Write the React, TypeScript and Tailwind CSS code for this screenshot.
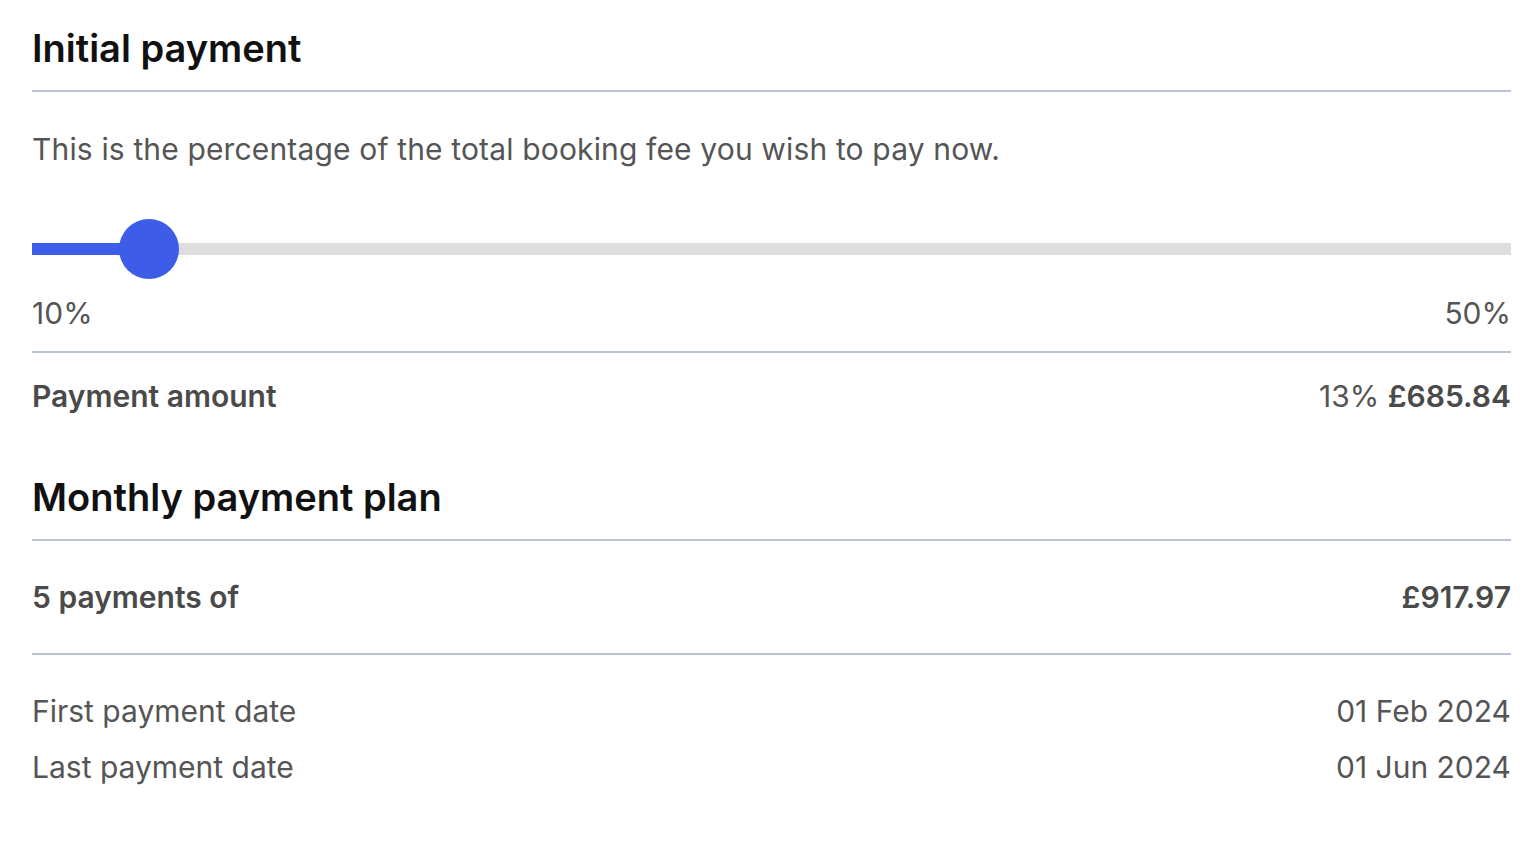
import { useState } from 'react';

const font = { fontFamily: 'Inter, "Noto Sans", sans-serif' };

export default function App() {
    const [pct] = useState(13.16);
    const min = 10;
    const max = 50;
    const fill = ((pct - min) / (max - min)) * 100;

    return (
        <div className="bg-white min-h-screen pl-8 pr-[27px] pt-[24px] text-[#555555]" style={font}>
            {/* Initial payment */}
            <h2 className="text-[38px] leading-[48px] font-semibold text-[#111111] pb-[18px] border-b-2 border-[#b9c5d6]">
                Initial payment
            </h2>
            <p className="text-[30px] leading-[40px] mt-[37px] tracking-[0.005em]">
                This is the percentage of the total booking fee you wish to pay now.
            </p>

            <div className="relative h-[60px] mt-[50px]">
                <div className="absolute left-0 right-0 top-[24px] h-[12px] bg-[#dddddd]" />
                <div className="absolute left-0 top-[24px] h-[12px] bg-[#3d5de8]" style={{ width: `${fill}%` }} />
                <div
                    className="absolute top-0 w-[60px] h-[60px] rounded-full bg-[#3d5de8] -translate-x-1/2"
                    style={{ left: `${fill}%` }}
                />
            </div>

            <div className="flex justify-between text-[30px] leading-[40px] mt-[14px] pb-[18px] border-b-2 border-[#b9c5d6]">
                <span>10%</span>
                <span>50%</span>
            </div>

            <div className="flex justify-between text-[30px] leading-[40px] mt-[23px]">
                <span className="font-semibold text-[#4a4a4a]">Payment amount</span>
                <span>
                    13% <span className="font-semibold text-[#4a4a4a]">£685.84</span>
                </span>
            </div>

            {/* Monthly payment plan */}
            <h2 className="text-[38px] leading-[48px] font-semibold text-[#111111] mt-[57px] pb-[18px] border-b-2 border-[#b9c5d6]">
                Monthly payment plan
            </h2>
            <div className="flex justify-between text-[30px] leading-[40px] pt-[36px] pb-[36px] border-b-2 border-[#b9c5d6] font-semibold text-[#4a4a4a]">
                <span>5 payments of</span>
                <span>£917.97</span>
            </div>
            <div className="text-[30px] leading-[56px] pt-[28px]">
                <div className="flex justify-between">
                    <span>First payment date</span>
                    <span>01 Feb 2024</span>
                </div>
                <div className="flex justify-between">
                    <span>Last payment date</span>
                    <span>01 Jun 2024</span>
                </div>
            </div>
        </div>
    );
}
